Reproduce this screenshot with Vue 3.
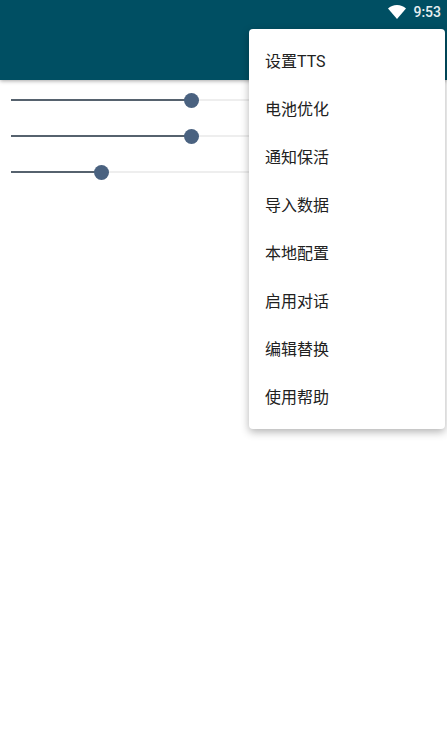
<script setup>
const sliders = [
  { id: 'speed', value: 180 },
  { id: 'pitch', value: 180 },
  { id: 'volume', value: 90 }
]

const menuItems = ['设置TTS', '电池优化', '通知保活', '导入数据', '本地配置', '启用对话', '编辑替换', '使用帮助']
</script>

<template>
  <div class="screen">
    <header class="app-bar">
      <div class="status-bar">
        <svg class="wifi" viewBox="0 0 18 14" width="18" height="14">
          <path d="M0 3.6C2.4 1.4 5.5 0 9 0s6.600 1.400 9 3.600L9 14z" fill="#fff" />
        </svg>
        <span class="clock">9:53</span>
      </div>
    </header>

    <div class="sliders">
      <div v-for="s in sliders" :key="s.id" class="slider">
        <div class="fill" :style="{ width: s.value + 'px' }"></div>
        <div class="thumb"></div>
      </div>
    </div>

    <ul class="menu">
      <li v-for="item in menuItems" :key="item" class="menu-item">{{ item }}</li>
    </ul>
  </div>
</template>

<style>
html,
body {
  margin: 0;
  background: #fff;
}
</style>

<style scoped>
.screen {
  position: relative;
  width: 447px;
  height: 751px;
  overflow: hidden;
  background: #fff;
  font-family: Roboto, "Noto Sans CJK SC", sans-serif;
}

.app-bar {
  height: 80px;
  background: #004f63;
  box-shadow: 0 1px 4px rgba(0, 0, 0, 0.35);
}

.status-bar {
  display: flex;
  justify-content: flex-end;
  align-items: center;
  gap: 7px;
  height: 24px;
  padding-right: 6px;
}

.wifi {
  margin-top: -1px;
}

.clock {
  color: #e6eef0;
  font-size: 14px;
  font-weight: 500;
}

.sliders {
  display: flex;
  flex-direction: column;
  gap: 34px;
  padding: 19px 11px 0;
}

.slider {
  display: flex;
  align-items: center;
  height: 2px;
  background: #eeeeee;
}

.fill {
  height: 2px;
  background: #56626e;
}

.thumb {
  flex: none;
  width: 15px;
  height: 15px;
  margin-left: -7px;
  border-radius: 50%;
  background: #4a6280;
}

.menu {
  position: absolute;
  top: 29px;
  left: 249px;
  width: 196px;
  margin: 0;
  padding: 8px 0;
  list-style: none;
  background: #fff;
  border-radius: 4px;
  box-shadow: 0 3px 8px rgba(0, 0, 0, 0.3);
}

.menu-item {
  height: 48px;
  padding: 0 16px;
  line-height: 50px;
  font-size: 16px;
  color: #212121;
}
</style>
